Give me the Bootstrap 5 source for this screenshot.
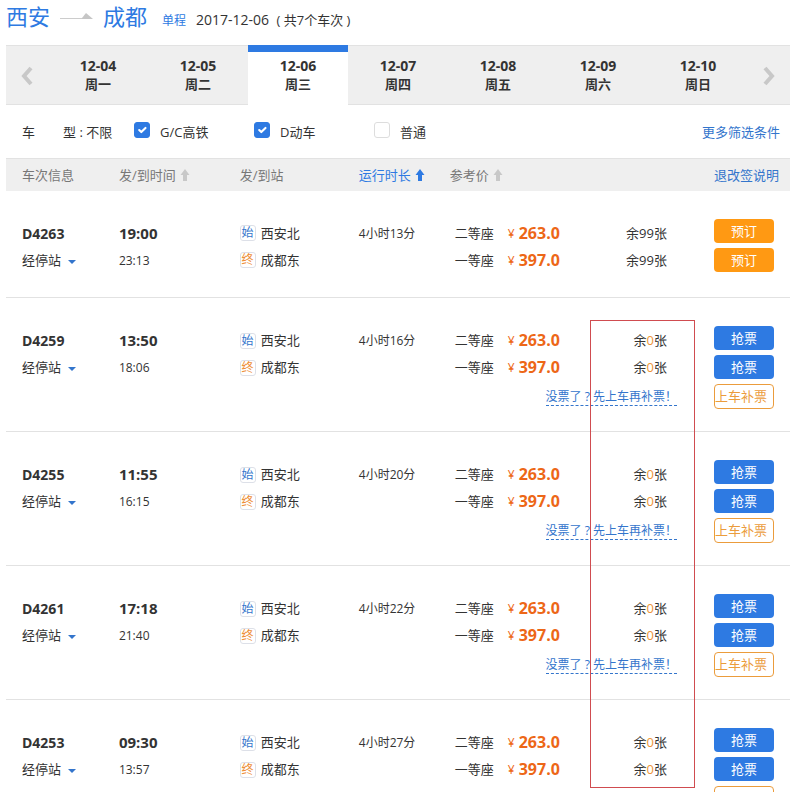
<!DOCTYPE html>
<html lang="zh-CN">
<head>
<meta charset="utf-8">
<meta name="viewport" content="width=device-width, initial-scale=1">
<title>西安到成都火车票</title>
<link rel="stylesheet" href="https://cdn.jsdelivr.net/npm/bootstrap@5.3.0/dist/css/bootstrap.min.css">
<style>
  :root { --blue: #2e7ae2; --link: #3375cc; --orange: #ff9913; --price: #ed6717; --line: #e2e2e2; --panel: #efefef; }
  body { font: 13px/20px "Open Sans", "Noto Sans CJK SC", sans-serif; color: #333; background: #fff; }
  a { color: var(--link); text-decoration: none; }
  .page { padding: 0 2px 0 6px; }

  .route { height: 45px; }
  .city { font-size: 22px; line-height: 32px; font-weight: 400; color: var(--blue); }
  .trip-kind { font-size: 12px; color: var(--blue); margin-left: 15px; }
  .trip-date { font-size: 14px; margin-left: 10px; }
  .trip-date span { font-size: 13px; margin-left: 4px; }

  .days { background: var(--panel); height: 60px; }
  .days button { border: solid var(--line); border-width: 1px 0; background: none; padding: 0; color: #333; }
  .day { flex: 1 1 0; font-weight: 700; line-height: 19px; }
  .day span { display: block; }
  .day-date { font-size: 14px; }
  .days .day.active { background: #fff; border-top: 7px solid var(--blue); border-bottom: 0; padding-bottom: 7px; }
  .step { flex: 0 0 42px; }

  .filters { height: 53px; padding: 0 10px 0 16px; }
  .filters .type-name { width: 112px; }
  .pick { width: 120px; }
  .pick .form-check-input { width: 16px; height: 16px; margin: 0 10px 3px 0; border-color: #ddd; border-radius: 3px; flex: none; }
  .pick .form-check-input:checked { background-color: var(--blue); border-color: var(--blue); }

  .trains { width: 100%; table-layout: fixed; }
  .trains th { background: var(--panel); border-top: 1px solid var(--line); height: 32px; font-weight: 400; color: #777; padding: 0; }
  .trains td { border-bottom: 1px solid var(--line); padding: 29px 0 0; vertical-align: top; line-height: 27px; height: 107px; }
  .trains th:first-child, .trains td:first-child { padding-left: 16px; }
  .trains td:last-child { padding: 28px 0 22px; }
  .sort { background: none; border: 0; padding: 0; color: inherit; }
  .sort svg { fill: #c8c8c8; margin-left: 4px; vertical-align: -2px; }
  .sort.active { color: var(--blue); }
  .sort.active svg { fill: var(--blue); }
  .train-no { font-size: 14px; font-weight: 700; }
  .depart { font-size: 15px; font-weight: 700; }
  .small-text { font-size: 12px; }
  .stops { background: none; border: 0; padding: 0; color: #333; display: block; }
  .stops::after { content: ""; display: inline-block; border: 4px solid transparent; border-top-color: var(--link); border-bottom: 0; margin-left: 7px; vertical-align: 1px; }
  .end-tag { width: 16px; height: 16px; border: 1px solid #dde0e8; border-radius: 3px; font-size: 12px; line-height: 14px; text-align: center; color: var(--link); margin-right: 5px; }
  .end-tag.last { color: #ee8d35; }
  .seat { padding-left: 5px; padding-right: 47px; }
  .seat-kind { width: 53px; }
  .yen { width: 11px; font-size: 12px; color: var(--price); }
  .fare { font-size: 16px; font-weight: 700; color: var(--price); }
  .none-left { color: #ee9435; }
  .hint { margin-right: 37px; line-height: 17px; margin-top: 7px; font-size: 12px; border-bottom: 1px dashed var(--link); }
  .act { width: 60px; height: 24px; border: 0; border-radius: 4px; padding: 0; color: #fff; line-height: 24px; }
  .act.book { background: var(--orange); }
  .act.grab { background: var(--blue); }
  .act.board { background: #fff; border: 1px solid #eb9c3c; color: #eb9c3c; height: 25px; line-height: 23px; padding-right: 6px; white-space: nowrap; }
  .acts { gap: 5px; }
  /* Highlight frame laid over the remaining-seat column */
  .frame { top: 162px; right: 95px; width: 105px; height: 468px; border: 1px solid #d04c50; pointer-events: none; }
</style>
<script src="https://cdn.jsdelivr.net/npm/bootstrap@5.3.0/dist/js/bootstrap.bundle.min.js"></script>
</head>
<body>
<main class="page">
  <header class="route d-flex align-items-baseline">
    <h1 class="city m-0">西安</h1>
    <svg class="mx-2 align-self-start mt-2" width="37" height="12" viewBox="0 0 37 12" aria-hidden="true"><path d="M2 10.500h32" stroke="#ccc" fill="none"/><path d="M24 10l4-5 7 6H24z" fill="#c6c6c6"/></svg>
    <h1 class="city m-0">成都</h1>
    <span class="trip-kind">单程</span>
    <span class="trip-date">2017-12-06<span> ( 共7个车次 )</span></span>
  </header>

  <nav class="days d-flex" aria-label="日期">
    <button type="button" class="step" aria-label="前一天"><svg width="12" height="20" viewBox="0 0 12 20"><path d="M10 2L3 10l7 8" fill="none" stroke="#c8c8c8" stroke-width="4"/></svg></button>
    <button type="button" class="day"><span class="day-date">12-04</span><span>周一</span></button>
    <button type="button" class="day"><span class="day-date">12-05</span><span>周二</span></button>
    <button type="button" class="day active"><span class="day-date">12-06</span><span>周三</span></button>
    <button type="button" class="day"><span class="day-date">12-07</span><span>周四</span></button>
    <button type="button" class="day"><span class="day-date">12-08</span><span>周五</span></button>
    <button type="button" class="day"><span class="day-date">12-09</span><span>周六</span></button>
    <button type="button" class="day"><span class="day-date">12-10</span><span>周日</span></button>
    <button type="button" class="step" aria-label="后一天"><svg width="12" height="20" viewBox="0 0 12 20"><path d="M2 2l7 8-7 8" fill="none" stroke="#c8c8c8" stroke-width="4"/></svg></button>
  </nav>

  <form class="filters d-flex align-items-center">
    <div class="type-name d-flex"><span class="me-4 pe-1">车</span><span>型 : 不限</span></div>
    <label class="pick d-flex align-items-center" for="gc"><input class="form-check-input" type="checkbox" id="gc" checked>G/C高铁</label>
    <label class="pick d-flex align-items-center" for="dd"><input class="form-check-input" type="checkbox" id="dd" checked>D动车</label>
    <label class="pick d-flex align-items-center" for="pt"><input class="form-check-input" type="checkbox" id="pt">普通</label>
    <a class="ms-auto" href="#">更多筛选条件</a>
  </form>

  <div class="position-relative">
    <table class="trains">
      <colgroup><col style="width:14.4%"><col style="width:15.4%"><col style="width:15.2%"><col style="width:11.6%"><col><col style="width:9.7%"></colgroup>
      <thead>
        <tr>
          <th>车次信息</th>
          <th><button type="button" class="sort">发/到时间<svg width="10" height="13" viewBox="0 0 10 13"><path d="M5 0l4.500 6H7v6H3V6H.500z"/></svg></button></th>
          <th>发/到站</th>
          <th><button type="button" class="sort active">运行时长<svg width="10" height="13" viewBox="0 0 10 13"><path d="M5 0l4.500 6H7v6H3V6H.500z"/></svg></button></th>
          <th><button type="button" class="sort">参考价<svg width="10" height="13" viewBox="0 0 10 13"><path d="M5 0l4.500 6H7v6H3V6H.500z"/></svg></button></th>
          <th><a href="#">退改签说明</a></th>
        </tr>
      </thead>
      <tbody>
        <tr>
          <td><div class="train-no">D4263</div><button type="button" class="stops">经停站</button></td>
          <td><div class="depart">19:00</div><div class="small-text">23:13</div></td>
          <td><div class="d-flex align-items-center"><span class="end-tag">始</span>西安北</div><div class="d-flex align-items-center"><span class="end-tag last">终</span>成都东</div></td>
          <td class="small-text">4小时13分</td>
          <td>
            <div class="seat d-flex"><span class="seat-kind">二等座</span><span class="yen">¥</span><span class="fare">263.0</span><span class="ms-auto">余99张</span></div>
            <div class="seat d-flex"><span class="seat-kind">一等座</span><span class="yen">¥</span><span class="fare">397.0</span><span class="ms-auto">余99张</span></div>
          </td>
          <td><div class="acts d-flex flex-column"><button type="button" class="act book">预订</button><button type="button" class="act book">预订</button></div></td>
        </tr>
        <tr>
          <td><div class="train-no">D4259</div><button type="button" class="stops">经停站</button></td>
          <td><div class="depart">13:50</div><div class="small-text">18:06</div></td>
          <td><div class="d-flex align-items-center"><span class="end-tag">始</span>西安北</div><div class="d-flex align-items-center"><span class="end-tag last">终</span>成都东</div></td>
          <td class="small-text">4小时16分</td>
          <td>
            <div class="seat d-flex"><span class="seat-kind">二等座</span><span class="yen">¥</span><span class="fare">263.0</span><span class="ms-auto">余<span class="none-left">0</span>张</span></div>
            <div class="seat d-flex"><span class="seat-kind">一等座</span><span class="yen">¥</span><span class="fare">397.0</span><span class="ms-auto">余<span class="none-left">0</span>张</span></div>
            <div class="d-flex justify-content-end"><a class="hint" href="#">没票了 ? 先上车再补票！</a></div>
          </td>
          <td><div class="acts d-flex flex-column"><button type="button" class="act grab">抢票</button><button type="button" class="act grab">抢票</button><button type="button" class="act board">上车补票</button></div></td>
        </tr>
        <tr>
          <td><div class="train-no">D4255</div><button type="button" class="stops">经停站</button></td>
          <td><div class="depart">11:55</div><div class="small-text">16:15</div></td>
          <td><div class="d-flex align-items-center"><span class="end-tag">始</span>西安北</div><div class="d-flex align-items-center"><span class="end-tag last">终</span>成都东</div></td>
          <td class="small-text">4小时20分</td>
          <td>
            <div class="seat d-flex"><span class="seat-kind">二等座</span><span class="yen">¥</span><span class="fare">263.0</span><span class="ms-auto">余<span class="none-left">0</span>张</span></div>
            <div class="seat d-flex"><span class="seat-kind">一等座</span><span class="yen">¥</span><span class="fare">397.0</span><span class="ms-auto">余<span class="none-left">0</span>张</span></div>
            <div class="d-flex justify-content-end"><a class="hint" href="#">没票了 ? 先上车再补票！</a></div>
          </td>
          <td><div class="acts d-flex flex-column"><button type="button" class="act grab">抢票</button><button type="button" class="act grab">抢票</button><button type="button" class="act board">上车补票</button></div></td>
        </tr>
        <tr>
          <td><div class="train-no">D4261</div><button type="button" class="stops">经停站</button></td>
          <td><div class="depart">17:18</div><div class="small-text">21:40</div></td>
          <td><div class="d-flex align-items-center"><span class="end-tag">始</span>西安北</div><div class="d-flex align-items-center"><span class="end-tag last">终</span>成都东</div></td>
          <td class="small-text">4小时22分</td>
          <td>
            <div class="seat d-flex"><span class="seat-kind">二等座</span><span class="yen">¥</span><span class="fare">263.0</span><span class="ms-auto">余<span class="none-left">0</span>张</span></div>
            <div class="seat d-flex"><span class="seat-kind">一等座</span><span class="yen">¥</span><span class="fare">397.0</span><span class="ms-auto">余<span class="none-left">0</span>张</span></div>
            <div class="d-flex justify-content-end"><a class="hint" href="#">没票了 ? 先上车再补票！</a></div>
          </td>
          <td><div class="acts d-flex flex-column"><button type="button" class="act grab">抢票</button><button type="button" class="act grab">抢票</button><button type="button" class="act board">上车补票</button></div></td>
        </tr>
        <tr>
          <td><div class="train-no">D4253</div><button type="button" class="stops">经停站</button></td>
          <td><div class="depart">09:30</div><div class="small-text">13:57</div></td>
          <td><div class="d-flex align-items-center"><span class="end-tag">始</span>西安北</div><div class="d-flex align-items-center"><span class="end-tag last">终</span>成都东</div></td>
          <td class="small-text">4小时27分</td>
          <td>
            <div class="seat d-flex"><span class="seat-kind">二等座</span><span class="yen">¥</span><span class="fare">263.0</span><span class="ms-auto">余<span class="none-left">0</span>张</span></div>
            <div class="seat d-flex"><span class="seat-kind">一等座</span><span class="yen">¥</span><span class="fare">397.0</span><span class="ms-auto">余<span class="none-left">0</span>张</span></div>
            <div class="d-flex justify-content-end"><a class="hint" href="#">没票了 ? 先上车再补票！</a></div>
          </td>
          <td><div class="acts d-flex flex-column"><button type="button" class="act grab">抢票</button><button type="button" class="act grab">抢票</button><button type="button" class="act board">上车补票</button></div></td>
        </tr>
      </tbody>
    </table>
    <div class="frame position-absolute"></div>
  </div>
</main>
</body>
</html>
